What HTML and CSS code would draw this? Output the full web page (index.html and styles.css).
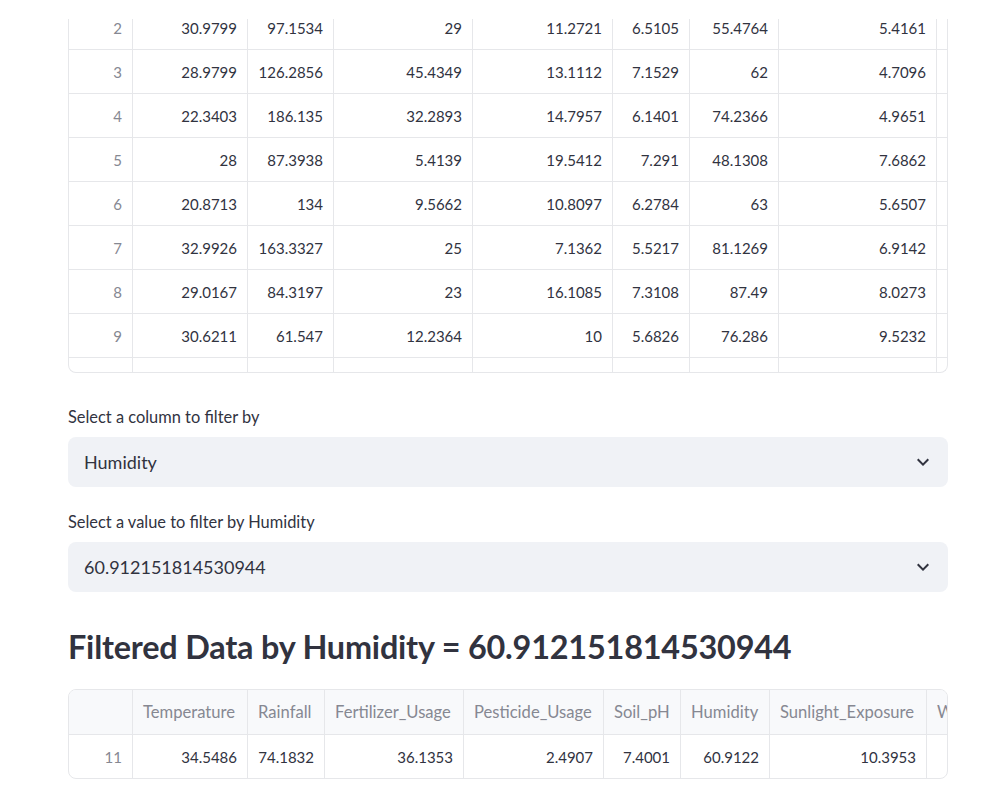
FILE: index.html
```html
<!DOCTYPE html>
<html lang="en">
<head>
<meta charset="utf-8">
<title>Filtered Data</title>
<link rel="stylesheet" href="styles.css">
</head>
<body>
<main class="page">
  <div class="grid-frame top-frame">
    <div class="grid top-grid">
      <div class="row first"><div class="cell idx">2</div><div class="cell">30.9799</div><div class="cell">97.1534</div><div class="cell">29</div><div class="cell">11.2721</div><div class="cell">6.5105</div><div class="cell">55.4764</div><div class="cell">5.4161</div><div class="cell"></div></div>
      <div class="row"><div class="cell idx">3</div><div class="cell">28.9799</div><div class="cell">126.2856</div><div class="cell">45.4349</div><div class="cell">13.1112</div><div class="cell">7.1529</div><div class="cell">62</div><div class="cell">4.7096</div><div class="cell"></div></div>
      <div class="row"><div class="cell idx">4</div><div class="cell">22.3403</div><div class="cell">186.135</div><div class="cell">32.2893</div><div class="cell">14.7957</div><div class="cell">6.1401</div><div class="cell">74.2366</div><div class="cell">4.9651</div><div class="cell"></div></div>
      <div class="row"><div class="cell idx">5</div><div class="cell">28</div><div class="cell">87.3938</div><div class="cell">5.4139</div><div class="cell">19.5412</div><div class="cell">7.291</div><div class="cell">48.1308</div><div class="cell">7.6862</div><div class="cell"></div></div>
      <div class="row"><div class="cell idx">6</div><div class="cell">20.8713</div><div class="cell">134</div><div class="cell">9.5662</div><div class="cell">10.8097</div><div class="cell">6.2784</div><div class="cell">63</div><div class="cell">5.6507</div><div class="cell"></div></div>
      <div class="row"><div class="cell idx">7</div><div class="cell">32.9926</div><div class="cell">163.3327</div><div class="cell">25</div><div class="cell">7.1362</div><div class="cell">5.5217</div><div class="cell">81.1269</div><div class="cell">6.9142</div><div class="cell"></div></div>
      <div class="row"><div class="cell idx">8</div><div class="cell">29.0167</div><div class="cell">84.3197</div><div class="cell">23</div><div class="cell">16.1085</div><div class="cell">7.3108</div><div class="cell">87.49</div><div class="cell">8.0273</div><div class="cell"></div></div>
      <div class="row"><div class="cell idx">9</div><div class="cell">30.6211</div><div class="cell">61.547</div><div class="cell">12.2364</div><div class="cell">10</div><div class="cell">5.6826</div><div class="cell">76.286</div><div class="cell">9.5232</div><div class="cell"></div></div>
      <div class="row"><div class="cell idx"></div><div class="cell"></div><div class="cell"></div><div class="cell"></div><div class="cell"></div><div class="cell"></div><div class="cell"></div><div class="cell"></div><div class="cell"></div></div>
    </div>
  </div>

  <div class="field field-first">
    <label class="field-label">Select a column to filter by</label>
    <div class="select">
      <span class="select-value">Humidity</span>
      <svg class="chevron" viewBox="0 0 24 24" width="24" height="24" aria-hidden="true"><path d="M16.59 8.59L12 13.17 7.41 8.59 6 10l6 6 6-6z"/></svg>
    </div>
  </div>

  <div class="field">
    <label class="field-label">Select a value to filter by Humidity</label>
    <div class="select">
      <span class="select-value">60.912151814530944</span>
      <svg class="chevron" viewBox="0 0 24 24" width="24" height="24" aria-hidden="true"><path d="M16.59 8.59L12 13.17 7.41 8.59 6 10l6 6 6-6z"/></svg>
    </div>
  </div>

  <h3 class="heading">Filtered Data by Humidity = 60.912151814530944</h3>

  <div class="grid-frame bottom-frame">
    <div class="grid bottom-grid">
      <div class="row head"><div class="cell idx"></div><div class="cell">Temperature</div><div class="cell">Rainfall</div><div class="cell">Fertilizer_Usage</div><div class="cell">Pesticide_Usage</div><div class="cell">Soil_pH</div><div class="cell">Humidity</div><div class="cell">Sunlight_Exposure</div><div class="cell">Wind_Speed</div></div>
      <div class="row last"><div class="cell idx">11</div><div class="cell">34.5486</div><div class="cell">74.1832</div><div class="cell">36.1353</div><div class="cell">2.4907</div><div class="cell">7.4001</div><div class="cell">60.9122</div><div class="cell">10.3953</div><div class="cell"></div></div>
    </div>
  </div>
</main>
</body>
</html>
```

FILE: styles.css
```css
* { box-sizing: border-box; }

html, body {
  margin: 0;
  padding: 0;
  background: #ffffff;
}

body {
  font-family: Lato, "Source Sans Pro", "Noto Sans", sans-serif;
  color: #31333f;
  overflow: hidden;
}

.page {
  width: 880px;
  margin-left: 68px;
  padding-top: 19px;
}

/* ---------- data grids ---------- */
.grid-frame {
  border: 1px solid #e6e7ea;
  overflow: hidden;
}

.top-frame {
  border-top: none;
  border-radius: 0 0 8px 8px;
  height: 354px;
}

.top-grid {
  --cols: 64px 115px 86px 139px 140px 77px 89px 158px 120px;
}

.bottom-frame {
  border-radius: 8px;
}

.bottom-grid {
  --cols: 64px 115px 77px 139px 140px 77px 89px 157px 120px;
}

.row {
  display: grid;
  grid-template-columns: var(--cols);
  width: max-content;
  height: 44px;
  border-bottom: 1px solid #e6e7ea;
}

/* first visible row: the grid is scrolled, its upper part is out of view */
.row.first {
  height: 31px;
}

.row.first .cell {
  align-items: flex-start;
  line-height: 18px;
}

.row.last {
  border-bottom: none;
  height: 43px;
}

.row.head {
  height: 45px;
  background: #f8f9fb;
}

.cell {
  display: flex;
  align-items: center;
  justify-content: flex-end;
  padding: 0 10px;
  border-right: 1px solid #e6e7ea;
  font-size: 15px;
  white-space: nowrap;
  overflow: hidden;
}

.cell.idx {
  color: #868892;
}

.row.head .cell {
  justify-content: flex-start;
  color: #868892;
  font-size: 16.6px;
  padding-left: 10px;
}

/* ---------- select widgets ---------- */
.field-first {
  margin-top: 30px;
}

.field + .field {
  margin-top: 21px;
}

.field-label {
  display: block;
  height: 28px;
  line-height: 28px;
  font-size: 16.4px;
  margin-bottom: 6px;
}

.select {
  height: 50px;
  background: #f0f2f6;
  border-radius: 8px;
  display: flex;
  align-items: center;
  justify-content: space-between;
  padding: 0 13px 0 16px;
}

.select-value {
  font-size: 18px;
}

.chevron {
  fill: #31333f;
  display: block;
}

/* ---------- heading ---------- */
.heading {
  margin: 34px 0 21px;
  font-size: 32.4px;
  line-height: 42px;
  font-weight: 700;
  letter-spacing: -0.2px;
}
```
